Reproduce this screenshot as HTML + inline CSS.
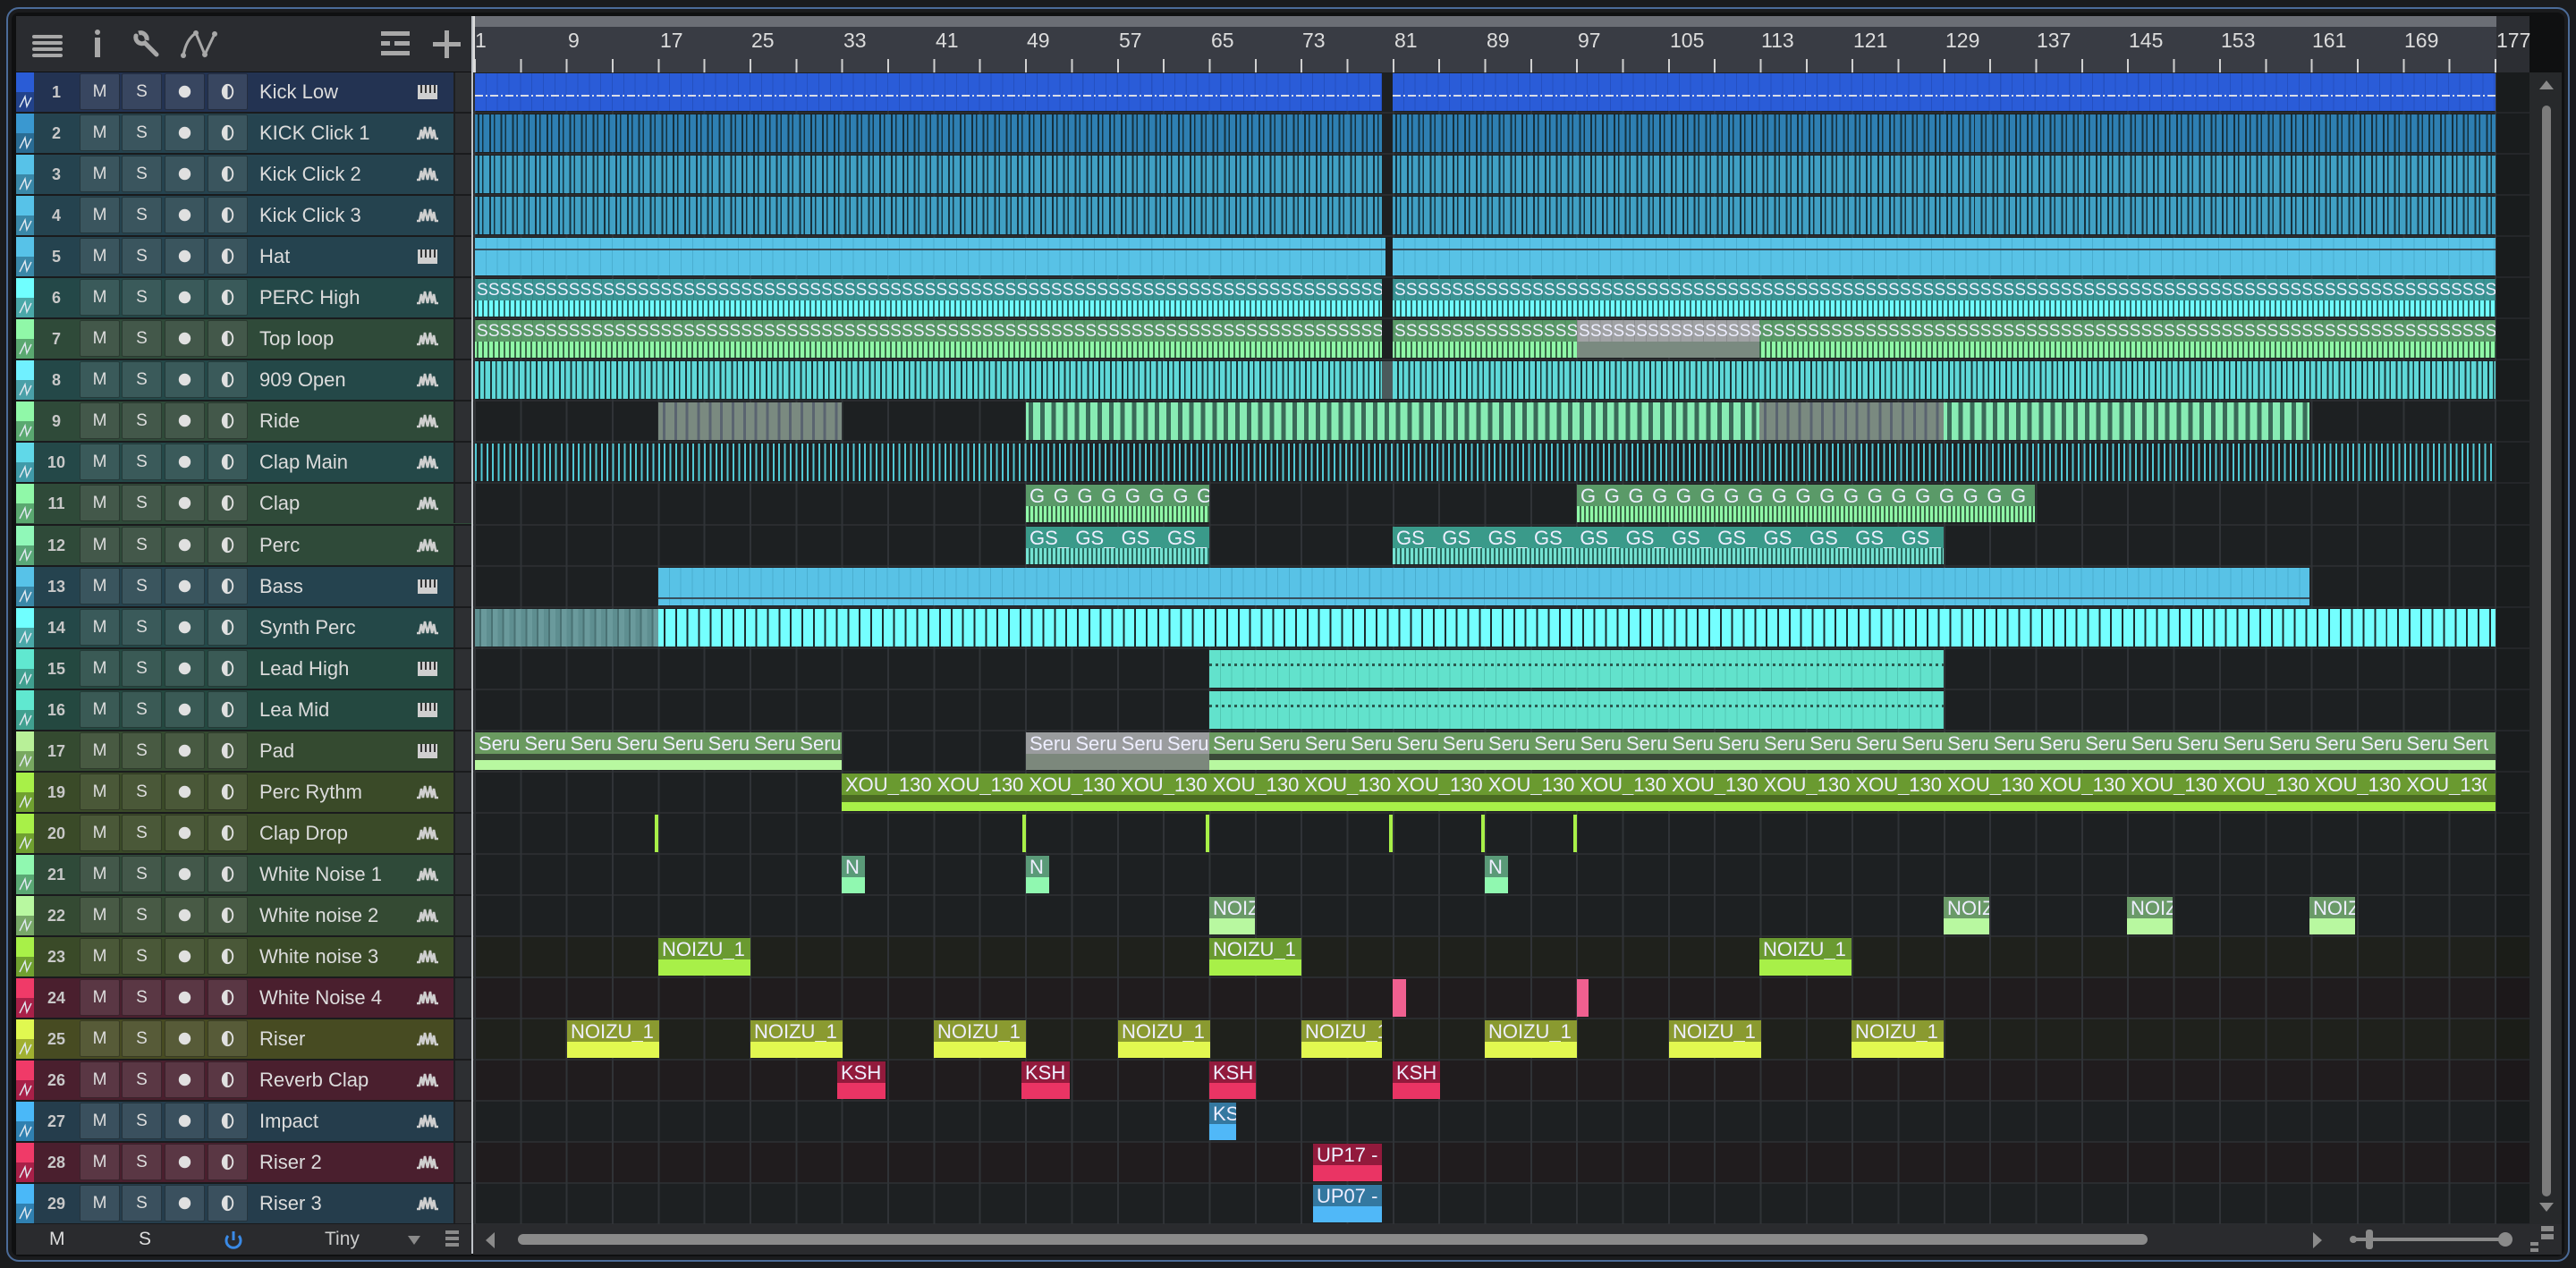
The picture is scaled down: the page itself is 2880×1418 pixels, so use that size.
<!DOCTYPE html>
<html><head><meta charset="utf-8">
<style>
*{box-sizing:border-box;margin:0;padding:0}
body{width:2880px;height:1418px;background:#1a1b1d;position:relative;overflow:hidden;font-family:"Liberation Sans",sans-serif}
.frame{position:absolute;left:7px;top:8px;width:2866px;height:1403px;border:2px solid #4b6b98;border-radius:14px}
.panel{position:absolute;left:13px;top:14px;width:2854px;height:1391px;background:#0f1011;border-radius:8px}
.hdr{position:absolute;left:18px;top:18px;width:509px;height:62px;background:#2a2c30}
.ruler{position:absolute;left:529px;top:18px;width:2299px;height:63px;background:#393c44}
.loop{position:absolute;left:0;top:0;width:2262px;height:12px;background:#6b6e75}
.rl{position:absolute;top:14px;font-size:23px;color:#dcdcdc}
.tl{position:absolute;left:529px;top:81px;width:2299px;height:1288px;background:#1d2022;overflow:hidden}
.grid{position:absolute;inset:0;background:repeating-linear-gradient(90deg,transparent 0 1px,#303337 1px 3px,transparent 3px 51.34px);z-index:2;pointer-events:none}
.row{position:relative;height:46.05px;border-bottom:2px solid #2a2c2f}
.row.p{background:#201c1e}.row.y{background:#1f211c}
.c{position:absolute;top:1px;height:42px;overflow:hidden;z-index:3}
.h{height:24px;font-size:22px;color:#eef;line-height:26px;white-space:nowrap;padding-left:4px;overflow:hidden}
.h span{display:inline-block;overflow:hidden;vertical-align:top}
.h.s{font-size:19px;letter-spacing:0.165px;padding-left:2px;background-image:repeating-linear-gradient(90deg,rgba(0,0,0,.12) 0 1px,transparent 1px 12.835px)}
.bd{height:18px}
.list{position:absolute;left:18px;top:81px;width:509px}
.t{position:relative;height:46.05px;border-bottom:2px solid #1a1b1d}
.cs{position:absolute;left:0;top:0;width:20px;height:44px}
.cs b{display:block;height:22px}
.cs i{display:block;height:22px}
.n{position:absolute;left:20px;top:0;width:50px;height:44px;text-align:center;font-weight:bold;font-size:18px;line-height:44px;color:#c8c8c8}
.b{position:absolute;top:1px;width:45px;height:41px;border:1px solid rgba(0,0,0,.35);border-radius:2px;text-align:center;line-height:40px;font-size:19px;color:#ddd}
.nm{position:absolute;left:272px;top:0;line-height:44px;font-size:22px;color:#dcdcdc;white-space:nowrap}
.ic{position:absolute;left:447px;top:12px}
.sb{position:absolute;left:489px;top:0;width:20px;height:44px;background:#2d2f32;border-left:2px solid #1e1f21}
.bot{position:absolute;top:1369px;height:34px;background:#2a2b2e}
</style></head><body>
<svg width="0" height="0" style="position:absolute">
<symbol id="wv" viewBox="0 0 26 20"><path d="M1 16 L4 16 L6 6 L8 16 L10 3 L13 16 L16 3 L18 16 L20 6 L22 16 L25 16" fill="none" stroke="#cfcfcf" stroke-width="2.6"/></symbol>
<symbol id="pn" viewBox="0 0 26 20"><rect x="2" y="2" width="22" height="16" fill="#cfcfcf"/><rect x="5" y="2" width="2" height="9" fill="#333"/><rect x="10" y="2" width="2" height="9" fill="#333"/><rect x="15" y="2" width="2" height="9" fill="#333"/><rect x="20" y="2" width="2" height="9" fill="#333"/></symbol>
<symbol id="au" viewBox="0 0 20 22"><path d="M4 17 L10 5 L12 16 L17 6" fill="none" stroke="#e0e8f0" stroke-width="1.4"/></symbol>
<symbol id="rc" viewBox="0 0 45 40"><circle cx="22.5" cy="20" r="7" fill="#e0e0e0"/></symbol>
<symbol id="mn" viewBox="0 0 45 40"><ellipse cx="22.5" cy="20" rx="6" ry="8" fill="none" stroke="#e0e0e0" stroke-width="2"/><path d="M22.5 12 A6 8 0 0 0 22.5 28 Z" fill="#e0e0e0"/></symbol>
</svg>
<div class="frame"></div>
<div class="panel"></div>
<div class="hdr">
<svg style="position:absolute;left:18px;top:20px" width="36" height="26"><rect x="0" y="1" width="34" height="4" rx="2" fill="#a8a8a8"/><rect x="0" y="8" width="34" height="4" rx="2" fill="#a8a8a8"/><rect x="0" y="15" width="34" height="4" rx="2" fill="#a8a8a8"/><rect x="0" y="22" width="34" height="4" rx="2" fill="#a8a8a8"/></svg>
<svg style="position:absolute;left:86px;top:15px" width="12" height="32"><circle cx="5" cy="3" r="3" fill="#a8a8a8"/><rect x="2" y="9" width="6" height="22" fill="#a8a8a8"/></svg>
<svg style="position:absolute;left:130px;top:16px" width="34" height="32"><path d="M4 6 A7 7 0 0 0 14 14 L27 27" fill="none" stroke="#a8a8a8" stroke-width="5" stroke-linecap="round"/><path d="M7 3 A7 7 0 0 1 16 11" fill="none" stroke="#a8a8a8" stroke-width="5"/></svg>
<svg style="position:absolute;left:182px;top:14px" width="50" height="34"><path d="M5 30 Q8 12 19 5 M19 5 L29 29 L40 6" fill="none" stroke="#a8a8a8" stroke-width="3"/><circle cx="5" cy="30" r="3" fill="#a8a8a8"/><circle cx="19" cy="5" r="3" fill="#a8a8a8"/><circle cx="29" cy="29" r="3" fill="#a8a8a8"/><circle cx="40" cy="6" r="3" fill="#a8a8a8"/></svg>
<svg style="position:absolute;left:408px;top:17px" width="34" height="28"><rect x="0" y="0" width="32" height="5" fill="#a8a8a8"/><rect x="0" y="11" width="10" height="5" fill="#a8a8a8"/><rect x="15" y="11" width="17" height="5" fill="#a8a8a8"/><rect x="0" y="22" width="32" height="5" fill="#a8a8a8"/></svg>
<svg style="position:absolute;left:466px;top:16px" width="32" height="32"><rect x="13" y="0" width="5" height="31" fill="#a8a8a8"/><rect x="0" y="13" width="31" height="5" fill="#a8a8a8"/></svg>
</div>
<div class="ruler"><div class="loop"></div>
<div style="position:absolute;left:2262px;top:0;width:37px;height:63px;background:#2c2e33"></div>
<span class="rl" style="left:2px">1</span><span class="rl" style="left:106px">9</span><span class="rl" style="left:209px">17</span><span class="rl" style="left:311px">25</span><span class="rl" style="left:414px">33</span><span class="rl" style="left:517px">41</span><span class="rl" style="left:619px">49</span><span class="rl" style="left:722px">57</span><span class="rl" style="left:825px">65</span><span class="rl" style="left:927px">73</span><span class="rl" style="left:1030px">81</span><span class="rl" style="left:1133px">89</span><span class="rl" style="left:1235px">97</span><span class="rl" style="left:1338px">105</span><span class="rl" style="left:1440px">113</span><span class="rl" style="left:1543px">121</span><span class="rl" style="left:1646px">129</span><span class="rl" style="left:1748px">137</span><span class="rl" style="left:1851px">145</span><span class="rl" style="left:1954px">153</span><span class="rl" style="left:2056px">161</span><span class="rl" style="left:2159px">169</span><span class="rl" style="left:2262px">177</span>
<div style="position:absolute;left:0;top:48px;width:2300px;height:15px;background:repeating-linear-gradient(90deg,transparent 0 1px,#d0d0d0 1px 3px,transparent 3px 51.34px)"></div>
<div style="position:absolute;left:0;top:0;width:2px;height:63px;background:#ddd"></div>
</div>

<div class="list">
<div class="t" style="background:#233352"><div class="cs"><b style="background:#2a5cd6"></b><i style="background:#22428a"><svg width="20" height="22"><use href="#au"/></svg></i></div><span class="n">1</span><span class="b" style="left:71px;background:#384660">M</span><span class="b" style="left:118px;background:#384660">S</span><span class="b" style="left:166px;background:#384660"><svg width="43" height="39"><use href="#rc"/></svg></span><span class="b" style="left:214px;background:#384660"><svg width="43" height="39"><use href="#mn"/></svg></span><span class="nm">Kick Low</span><svg class="ic" width="26" height="20"><use href="#pn"/></svg><div class="sb"></div></div>
<div class="t" style="background:#25434f"><div class="cs"><b style="background:#3a98d0"></b><i style="background:#2a6c94"><svg width="20" height="22"><use href="#au"/></svg></i></div><span class="n">2</span><span class="b" style="left:71px;background:#3a555e">M</span><span class="b" style="left:118px;background:#3a555e">S</span><span class="b" style="left:166px;background:#3a555e"><svg width="43" height="39"><use href="#rc"/></svg></span><span class="b" style="left:214px;background:#3a555e"><svg width="43" height="39"><use href="#mn"/></svg></span><span class="nm">KICK Click 1</span><svg class="ic" width="26" height="20"><use href="#wv"/></svg><div class="sb"></div></div>
<div class="t" style="background:#25434f"><div class="cs"><b style="background:#57c2e8"></b><i style="background:#3a88a8"><svg width="20" height="22"><use href="#au"/></svg></i></div><span class="n">3</span><span class="b" style="left:71px;background:#3a555e">M</span><span class="b" style="left:118px;background:#3a555e">S</span><span class="b" style="left:166px;background:#3a555e"><svg width="43" height="39"><use href="#rc"/></svg></span><span class="b" style="left:214px;background:#3a555e"><svg width="43" height="39"><use href="#mn"/></svg></span><span class="nm">Kick Click 2</span><svg class="ic" width="26" height="20"><use href="#wv"/></svg><div class="sb"></div></div>
<div class="t" style="background:#25434f"><div class="cs"><b style="background:#57c2e8"></b><i style="background:#3a88a8"><svg width="20" height="22"><use href="#au"/></svg></i></div><span class="n">4</span><span class="b" style="left:71px;background:#3a555e">M</span><span class="b" style="left:118px;background:#3a555e">S</span><span class="b" style="left:166px;background:#3a555e"><svg width="43" height="39"><use href="#rc"/></svg></span><span class="b" style="left:214px;background:#3a555e"><svg width="43" height="39"><use href="#mn"/></svg></span><span class="nm">Kick Click 3</span><svg class="ic" width="26" height="20"><use href="#wv"/></svg><div class="sb"></div></div>
<div class="t" style="background:#25434f"><div class="cs"><b style="background:#57c2e8"></b><i style="background:#3a88a8"><svg width="20" height="22"><use href="#au"/></svg></i></div><span class="n">5</span><span class="b" style="left:71px;background:#3a555e">M</span><span class="b" style="left:118px;background:#3a555e">S</span><span class="b" style="left:166px;background:#3a555e"><svg width="43" height="39"><use href="#rc"/></svg></span><span class="b" style="left:214px;background:#3a555e"><svg width="43" height="39"><use href="#mn"/></svg></span><span class="nm">Hat</span><svg class="ic" width="26" height="20"><use href="#pn"/></svg><div class="sb"></div></div>
<div class="t" style="background:#244848"><div class="cs"><b style="background:#70ffff"></b><i style="background:#4aa8a8"><svg width="20" height="22"><use href="#au"/></svg></i></div><span class="n">6</span><span class="b" style="left:71px;background:#3a5a5a">M</span><span class="b" style="left:118px;background:#3a5a5a">S</span><span class="b" style="left:166px;background:#3a5a5a"><svg width="43" height="39"><use href="#rc"/></svg></span><span class="b" style="left:214px;background:#3a5a5a"><svg width="43" height="39"><use href="#mn"/></svg></span><span class="nm">PERC High</span><svg class="ic" width="26" height="20"><use href="#wv"/></svg><div class="sb"></div></div>
<div class="t" style="background:#2f4a39"><div class="cs"><b style="background:#90f8a8"></b><i style="background:#5aa870"><svg width="20" height="22"><use href="#au"/></svg></i></div><span class="n">7</span><span class="b" style="left:71px;background:#43584a">M</span><span class="b" style="left:118px;background:#43584a">S</span><span class="b" style="left:166px;background:#43584a"><svg width="43" height="39"><use href="#rc"/></svg></span><span class="b" style="left:214px;background:#43584a"><svg width="43" height="39"><use href="#mn"/></svg></span><span class="nm">Top loop</span><svg class="ic" width="26" height="20"><use href="#wv"/></svg><div class="sb"></div></div>
<div class="t" style="background:#244848"><div class="cs"><b style="background:#70f0ff"></b><i style="background:#4aa0a8"><svg width="20" height="22"><use href="#au"/></svg></i></div><span class="n">8</span><span class="b" style="left:71px;background:#3a5a5a">M</span><span class="b" style="left:118px;background:#3a5a5a">S</span><span class="b" style="left:166px;background:#3a5a5a"><svg width="43" height="39"><use href="#rc"/></svg></span><span class="b" style="left:214px;background:#3a5a5a"><svg width="43" height="39"><use href="#mn"/></svg></span><span class="nm">909 Open</span><svg class="ic" width="26" height="20"><use href="#wv"/></svg><div class="sb"></div></div>
<div class="t" style="background:#2f4a39"><div class="cs"><b style="background:#90f8a8"></b><i style="background:#5aa870"><svg width="20" height="22"><use href="#au"/></svg></i></div><span class="n">9</span><span class="b" style="left:71px;background:#43584a">M</span><span class="b" style="left:118px;background:#43584a">S</span><span class="b" style="left:166px;background:#43584a"><svg width="43" height="39"><use href="#rc"/></svg></span><span class="b" style="left:214px;background:#43584a"><svg width="43" height="39"><use href="#mn"/></svg></span><span class="nm">Ride</span><svg class="ic" width="26" height="20"><use href="#wv"/></svg><div class="sb"></div></div>
<div class="t" style="background:#244848"><div class="cs"><b style="background:#60d8e8"></b><i style="background:#409aa8"><svg width="20" height="22"><use href="#au"/></svg></i></div><span class="n">10</span><span class="b" style="left:71px;background:#3a5a5a">M</span><span class="b" style="left:118px;background:#3a5a5a">S</span><span class="b" style="left:166px;background:#3a5a5a"><svg width="43" height="39"><use href="#rc"/></svg></span><span class="b" style="left:214px;background:#3a5a5a"><svg width="43" height="39"><use href="#mn"/></svg></span><span class="nm">Clap Main</span><svg class="ic" width="26" height="20"><use href="#wv"/></svg><div class="sb"></div></div>
<div class="t" style="background:#2f4a39"><div class="cs"><b style="background:#90f8a8"></b><i style="background:#5aa870"><svg width="20" height="22"><use href="#au"/></svg></i></div><span class="n">11</span><span class="b" style="left:71px;background:#43584a">M</span><span class="b" style="left:118px;background:#43584a">S</span><span class="b" style="left:166px;background:#43584a"><svg width="43" height="39"><use href="#rc"/></svg></span><span class="b" style="left:214px;background:#43584a"><svg width="43" height="39"><use href="#mn"/></svg></span><span class="nm">Clap</span><svg class="ic" width="26" height="20"><use href="#wv"/></svg><div class="sb"></div></div>
<div class="t" style="background:#2f4a39"><div class="cs"><b style="background:#90f8b8"></b><i style="background:#5aa878"><svg width="20" height="22"><use href="#au"/></svg></i></div><span class="n">12</span><span class="b" style="left:71px;background:#43584a">M</span><span class="b" style="left:118px;background:#43584a">S</span><span class="b" style="left:166px;background:#43584a"><svg width="43" height="39"><use href="#rc"/></svg></span><span class="b" style="left:214px;background:#43584a"><svg width="43" height="39"><use href="#mn"/></svg></span><span class="nm">Perc</span><svg class="ic" width="26" height="20"><use href="#wv"/></svg><div class="sb"></div></div>
<div class="t" style="background:#25434f"><div class="cs"><b style="background:#57c2e8"></b><i style="background:#3a88a8"><svg width="20" height="22"><use href="#au"/></svg></i></div><span class="n">13</span><span class="b" style="left:71px;background:#3a555e">M</span><span class="b" style="left:118px;background:#3a555e">S</span><span class="b" style="left:166px;background:#3a555e"><svg width="43" height="39"><use href="#rc"/></svg></span><span class="b" style="left:214px;background:#3a555e"><svg width="43" height="39"><use href="#mn"/></svg></span><span class="nm">Bass</span><svg class="ic" width="26" height="20"><use href="#pn"/></svg><div class="sb"></div></div>
<div class="t" style="background:#244848"><div class="cs"><b style="background:#70ffff"></b><i style="background:#4aa8a8"><svg width="20" height="22"><use href="#au"/></svg></i></div><span class="n">14</span><span class="b" style="left:71px;background:#3a5a5a">M</span><span class="b" style="left:118px;background:#3a5a5a">S</span><span class="b" style="left:166px;background:#3a5a5a"><svg width="43" height="39"><use href="#rc"/></svg></span><span class="b" style="left:214px;background:#3a5a5a"><svg width="43" height="39"><use href="#mn"/></svg></span><span class="nm">Synth Perc</span><svg class="ic" width="26" height="20"><use href="#wv"/></svg><div class="sb"></div></div>
<div class="t" style="background:#244840"><div class="cs"><b style="background:#60e8d0"></b><i style="background:#40a090"><svg width="20" height="22"><use href="#au"/></svg></i></div><span class="n">15</span><span class="b" style="left:71px;background:#3a5a55">M</span><span class="b" style="left:118px;background:#3a5a55">S</span><span class="b" style="left:166px;background:#3a5a55"><svg width="43" height="39"><use href="#rc"/></svg></span><span class="b" style="left:214px;background:#3a5a55"><svg width="43" height="39"><use href="#mn"/></svg></span><span class="nm">Lead High</span><svg class="ic" width="26" height="20"><use href="#pn"/></svg><div class="sb"></div></div>
<div class="t" style="background:#244840"><div class="cs"><b style="background:#60e8d0"></b><i style="background:#40a090"><svg width="20" height="22"><use href="#au"/></svg></i></div><span class="n">16</span><span class="b" style="left:71px;background:#3a5a55">M</span><span class="b" style="left:118px;background:#3a5a55">S</span><span class="b" style="left:166px;background:#3a5a55"><svg width="43" height="39"><use href="#rc"/></svg></span><span class="b" style="left:214px;background:#3a5a55"><svg width="43" height="39"><use href="#mn"/></svg></span><span class="nm">Lea Mid</span><svg class="ic" width="26" height="20"><use href="#pn"/></svg><div class="sb"></div></div>
<div class="t" style="background:#344a30"><div class="cs"><b style="background:#b8f098"></b><i style="background:#78a860"><svg width="20" height="22"><use href="#au"/></svg></i></div><span class="n">17</span><span class="b" style="left:71px;background:#485a42">M</span><span class="b" style="left:118px;background:#485a42">S</span><span class="b" style="left:166px;background:#485a42"><svg width="43" height="39"><use href="#rc"/></svg></span><span class="b" style="left:214px;background:#485a42"><svg width="43" height="39"><use href="#mn"/></svg></span><span class="nm">Pad</span><svg class="ic" width="26" height="20"><use href="#pn"/></svg><div class="sb"></div></div>
<div class="t" style="background:#3a4a28"><div class="cs"><b style="background:#a8f048"></b><i style="background:#70a030"><svg width="20" height="22"><use href="#au"/></svg></i></div><span class="n">19</span><span class="b" style="left:71px;background:#4a5838">M</span><span class="b" style="left:118px;background:#4a5838">S</span><span class="b" style="left:166px;background:#4a5838"><svg width="43" height="39"><use href="#rc"/></svg></span><span class="b" style="left:214px;background:#4a5838"><svg width="43" height="39"><use href="#mn"/></svg></span><span class="nm">Perc Rythm</span><svg class="ic" width="26" height="20"><use href="#wv"/></svg><div class="sb"></div></div>
<div class="t" style="background:#3a4a28"><div class="cs"><b style="background:#a8f048"></b><i style="background:#70a030"><svg width="20" height="22"><use href="#au"/></svg></i></div><span class="n">20</span><span class="b" style="left:71px;background:#4a5838">M</span><span class="b" style="left:118px;background:#4a5838">S</span><span class="b" style="left:166px;background:#4a5838"><svg width="43" height="39"><use href="#rc"/></svg></span><span class="b" style="left:214px;background:#4a5838"><svg width="43" height="39"><use href="#mn"/></svg></span><span class="nm">Clap Drop</span><svg class="ic" width="26" height="20"><use href="#wv"/></svg><div class="sb"></div></div>
<div class="t" style="background:#2f4a39"><div class="cs"><b style="background:#90f8b0"></b><i style="background:#5aa874"><svg width="20" height="22"><use href="#au"/></svg></i></div><span class="n">21</span><span class="b" style="left:71px;background:#43584a">M</span><span class="b" style="left:118px;background:#43584a">S</span><span class="b" style="left:166px;background:#43584a"><svg width="43" height="39"><use href="#rc"/></svg></span><span class="b" style="left:214px;background:#43584a"><svg width="43" height="39"><use href="#mn"/></svg></span><span class="nm">White Noise 1</span><svg class="ic" width="26" height="20"><use href="#wv"/></svg><div class="sb"></div></div>
<div class="t" style="background:#344a33"><div class="cs"><b style="background:#b8f8a0"></b><i style="background:#78a868"><svg width="20" height="22"><use href="#au"/></svg></i></div><span class="n">22</span><span class="b" style="left:71px;background:#485a45">M</span><span class="b" style="left:118px;background:#485a45">S</span><span class="b" style="left:166px;background:#485a45"><svg width="43" height="39"><use href="#rc"/></svg></span><span class="b" style="left:214px;background:#485a45"><svg width="43" height="39"><use href="#mn"/></svg></span><span class="nm">White noise 2</span><svg class="ic" width="26" height="20"><use href="#wv"/></svg><div class="sb"></div></div>
<div class="t" style="background:#3a4a28"><div class="cs"><b style="background:#a8f048"></b><i style="background:#70a030"><svg width="20" height="22"><use href="#au"/></svg></i></div><span class="n">23</span><span class="b" style="left:71px;background:#4a5838">M</span><span class="b" style="left:118px;background:#4a5838">S</span><span class="b" style="left:166px;background:#4a5838"><svg width="43" height="39"><use href="#rc"/></svg></span><span class="b" style="left:214px;background:#4a5838"><svg width="43" height="39"><use href="#mn"/></svg></span><span class="nm">White noise 3</span><svg class="ic" width="26" height="20"><use href="#wv"/></svg><div class="sb"></div></div>
<div class="t" style="background:#4a1f2e"><div class="cs"><b style="background:#f03a68"></b><i style="background:#a82048"><svg width="20" height="22"><use href="#au"/></svg></i></div><span class="n">24</span><span class="b" style="left:71px;background:#5a3744">M</span><span class="b" style="left:118px;background:#5a3744">S</span><span class="b" style="left:166px;background:#5a3744"><svg width="43" height="39"><use href="#rc"/></svg></span><span class="b" style="left:214px;background:#5a3744"><svg width="43" height="39"><use href="#mn"/></svg></span><span class="nm">White Noise 4</span><svg class="ic" width="26" height="20"><use href="#wv"/></svg><div class="sb"></div></div>
<div class="t" style="background:#474b22"><div class="cs"><b style="background:#e0f850"></b><i style="background:#a0b030"><svg width="20" height="22"><use href="#au"/></svg></i></div><span class="n">25</span><span class="b" style="left:71px;background:#575b38">M</span><span class="b" style="left:118px;background:#575b38">S</span><span class="b" style="left:166px;background:#575b38"><svg width="43" height="39"><use href="#rc"/></svg></span><span class="b" style="left:214px;background:#575b38"><svg width="43" height="39"><use href="#mn"/></svg></span><span class="nm">Riser</span><svg class="ic" width="26" height="20"><use href="#wv"/></svg><div class="sb"></div></div>
<div class="t" style="background:#4a1f2e"><div class="cs"><b style="background:#f03a68"></b><i style="background:#a82048"><svg width="20" height="22"><use href="#au"/></svg></i></div><span class="n">26</span><span class="b" style="left:71px;background:#5a3744">M</span><span class="b" style="left:118px;background:#5a3744">S</span><span class="b" style="left:166px;background:#5a3744"><svg width="43" height="39"><use href="#rc"/></svg></span><span class="b" style="left:214px;background:#5a3744"><svg width="43" height="39"><use href="#mn"/></svg></span><span class="nm">Reverb Clap</span><svg class="ic" width="26" height="20"><use href="#wv"/></svg><div class="sb"></div></div>
<div class="t" style="background:#253d4c"><div class="cs"><b style="background:#4ab8f8"></b><i style="background:#3080b0"><svg width="20" height="22"><use href="#au"/></svg></i></div><span class="n">27</span><span class="b" style="left:71px;background:#3a505e">M</span><span class="b" style="left:118px;background:#3a505e">S</span><span class="b" style="left:166px;background:#3a505e"><svg width="43" height="39"><use href="#rc"/></svg></span><span class="b" style="left:214px;background:#3a505e"><svg width="43" height="39"><use href="#mn"/></svg></span><span class="nm">Impact</span><svg class="ic" width="26" height="20"><use href="#wv"/></svg><div class="sb"></div></div>
<div class="t" style="background:#4a1f2e"><div class="cs"><b style="background:#f03a68"></b><i style="background:#a82048"><svg width="20" height="22"><use href="#au"/></svg></i></div><span class="n">28</span><span class="b" style="left:71px;background:#5a3744">M</span><span class="b" style="left:118px;background:#5a3744">S</span><span class="b" style="left:166px;background:#5a3744"><svg width="43" height="39"><use href="#rc"/></svg></span><span class="b" style="left:214px;background:#5a3744"><svg width="43" height="39"><use href="#mn"/></svg></span><span class="nm">Riser 2</span><svg class="ic" width="26" height="20"><use href="#wv"/></svg><div class="sb"></div></div>
<div class="t" style="background:#253d4c"><div class="cs"><b style="background:#4ab8f8"></b><i style="background:#3080b0"><svg width="20" height="22"><use href="#au"/></svg></i></div><span class="n">29</span><span class="b" style="left:71px;background:#3a505e">M</span><span class="b" style="left:118px;background:#3a505e">S</span><span class="b" style="left:166px;background:#3a505e"><svg width="43" height="39"><use href="#rc"/></svg></span><span class="b" style="left:214px;background:#3a505e"><svg width="43" height="39"><use href="#mn"/></svg></span><span class="nm">Riser 3</span><svg class="ic" width="26" height="20"><use href="#wv"/></svg><div class="sb"></div></div>
</div>
<div style="position:absolute;left:527px;top:18px;width:2px;height:1384px;background:#bfc3c8"></div>

<div class="tl"><div class="grid"></div>
<!-- 1 -->
<div class="row"><div class="c" style="left:2px;width:1014px;background:repeating-linear-gradient(90deg,#2a5cd8 0 11.8px,#2450c0 11.8px 12.835px)"><div style="margin-top:24px;height:2px;background:repeating-linear-gradient(90deg,#d8dce8 0 9px,transparent 9px 12px,#d8dce8 12px 14px,transparent 14px 17px)"></div></div><div class="c" style="left:1028px;width:1233px;background:repeating-linear-gradient(90deg,#2a5cd8 0 11.8px,#2450c0 11.8px 12.835px)"><div style="margin-top:24px;height:2px;background:repeating-linear-gradient(90deg,#d8dce8 0 9px,transparent 9px 12px,#d8dce8 12px 14px,transparent 14px 17px)"></div></div></div>
<!-- 2 -->
<div class="row"><div class="c" style="left:2px;width:1014px;background:repeating-linear-gradient(90deg,#2e7fb2 0 3px,#14303e 3px 5px,#2e7fb2 5px 8px,#14303e 8px 9.5px,#2e7fb2 9.5px 12.835px)"></div><div class="c" style="left:1028px;width:1233px;background:repeating-linear-gradient(90deg,#2e7fb2 0 3px,#14303e 3px 5px,#2e7fb2 5px 8px,#14303e 8px 9.5px,#2e7fb2 9.5px 12.835px)"></div></div>
<!-- 3 -->
<div class="row"><div class="c" style="left:2px;width:1014px;background:repeating-linear-gradient(90deg,#40a0c4 0 3px,#16323e 3px 5px,#40a0c4 5px 8px,#16323e 8px 9.5px,#40a0c4 9.5px 12.835px)"></div><div class="c" style="left:1028px;width:1233px;background:repeating-linear-gradient(90deg,#40a0c4 0 3px,#16323e 3px 5px,#40a0c4 5px 8px,#16323e 8px 9.5px,#40a0c4 9.5px 12.835px)"></div></div>
<!-- 4 -->
<div class="row"><div class="c" style="left:2px;width:1014px;background:repeating-linear-gradient(90deg,#40a0c4 0 3px,#16323e 3px 5px,#40a0c4 5px 8px,#16323e 8px 9.5px,#40a0c4 9.5px 12.835px)"></div><div class="c" style="left:1028px;width:1233px;background:repeating-linear-gradient(90deg,#40a0c4 0 3px,#16323e 3px 5px,#40a0c4 5px 8px,#16323e 8px 9.5px,#40a0c4 9.5px 12.835px)"></div></div>
<!-- 5 -->
<div class="row"><div class="c" style="left:2px;width:1018px;background:repeating-linear-gradient(90deg,#58c2e6 0 11.8px,#4aaed0 11.8px 12.835px)"><div style="margin-top:12px;height:2px;background:#36505e"></div></div><div class="c" style="left:1028px;width:1233px;background:repeating-linear-gradient(90deg,#58c2e6 0 11.8px,#4aaed0 11.8px 12.835px)"><div style="margin-top:12px;height:2px;background:#36505e"></div></div></div>
<!-- 6 -->
<div class="row"><div class="c" style="left:2px;width:1014px;background:#70fcff"><div class="h s" style="background-color:#3a9494">SSSSSSSSSSSSSSSSSSSSSSSSSSSSSSSSSSSSSSSSSSSSSSSSSSSSSSSSSSSSSSSSSSSSSSSSSSSSSSS</div><div class="bd" style="background:repeating-linear-gradient(90deg,transparent 0 2px,#2a6a6a 2px 4px,transparent 4px 6px)"></div></div><div class="c" style="left:1028px;width:1233px;background:#70fcff"><div class="h s" style="background-color:#3a9494">SSSSSSSSSSSSSSSSSSSSSSSSSSSSSSSSSSSSSSSSSSSSSSSSSSSSSSSSSSSSSSSSSSSSSSSSSSSSSSSSSSSSSSSSSSSSSSSS</div><div class="bd" style="background:repeating-linear-gradient(90deg,transparent 0 2px,#2a6a6a 2px 4px,transparent 4px 6px)"></div></div></div>
<!-- 7 -->
<div class="row"><div class="c" style="left:2px;width:1014px;background:#90f8a8"><div class="h s" style="background-color:#5a9a68">SSSSSSSSSSSSSSSSSSSSSSSSSSSSSSSSSSSSSSSSSSSSSSSSSSSSSSSSSSSSSSSSSSSSSSSSSSSSSSS</div><div class="bd" style="background:repeating-linear-gradient(90deg,transparent 0 2px,#3a6a48 2px 4px,transparent 4px 6px)"></div></div><div class="c" style="left:1028px;width:1233px;background:#90f8a8"><div class="h s" style="background-color:#5a9a68">SSSSSSSSSSSSSSSSSSSSSSSSSSSSSSSSSSSSSSSSSSSSSSSSSSSSSSSSSSSSSSSSSSSSSSSSSSSSSSSSSSSSSSSSSSSSSSSS</div><div class="bd" style="background:repeating-linear-gradient(90deg,transparent 0 2px,#3a6a48 2px 4px,transparent 4px 6px)"></div></div><div class="c" style="left:1234px;width:204px;background:#7a8a80"><div class="h s" style="background-color:#a0a2a4">SSSSSSSSSSSSSSSS</div></div></div>
<!-- 8 -->
<div class="row"><div class="c" style="left:2px;width:2259px;background:repeating-linear-gradient(90deg,#5fd8d8 0 4px,#183436 4px 6px,#5fd8d8 6px 10px,#183436 10px 11.5px,#5fd8d8 11.5px 12.835px)"></div><div class="c" style="left:1016px;width:12px;background:#4a5a5c"></div></div>
<!-- 9 -->
<div class="row"><div class="c" style="left:207px;width:205px;background:repeating-linear-gradient(90deg,#7a8a80 0 5px,#5a6470 5px 8px,#7a8a80 8px 12.835px)"></div><div class="c" style="left:618px;width:1435px;background:repeating-linear-gradient(90deg,#88ecb4 0 3px,#3a6a58 3px 8px,#88ecb4 8px 12.835px)"></div><div class="c" style="left:1438px;width:206px;background:repeating-linear-gradient(90deg,#7a8a80 0 5px,#5a6470 5px 8px,#7a8a80 8px 12.835px)"></div></div>
<!-- 10 -->
<div class="row"><div class="c" style="left:2px;width:2259px;background:repeating-linear-gradient(90deg,#52c8d4 0 2px,transparent 2px 6.4px)"></div></div>
<!-- 11 -->
<div class="row"><div class="c" style="left:618px;width:205px;background:#90f8a8"><div class="h" style="background:#5a9a68;word-spacing:3.5px">G G G G G G G G</div><div class="bd" style="background:repeating-linear-gradient(90deg,transparent 0 3px,#3a6a48 3px 5px)"></div></div><div class="c" style="left:1234px;width:512px;background:#90f8a8"><div class="h" style="background:#5a9a68;word-spacing:3.5px">G G G G G G G G G G G G G G G G G G G G</div><div class="bd" style="background:repeating-linear-gradient(90deg,transparent 0 3px,#3a6a48 3px 5px)"></div></div></div>
<!-- 12 -->
<div class="row"><div class="c" style="left:618px;width:205px;background:#74e2d2"><div class="h" style="background:#3a9a8a"><span style="width:51.34px">GS_</span><span style="width:51.34px">GS_</span><span style="width:51.34px">GS_</span><span style="width:48px">GS_</span></div><div class="bd" style="background:repeating-linear-gradient(90deg,transparent 0 3px,#2a6a60 3px 5px)"></div></div><div class="c" style="left:1028px;width:616px;background:#74e2d2"><div class="h" style="background:#3a9a8a"><span style="width:51.34px">GS_</span><span style="width:51.34px">GS_</span><span style="width:51.34px">GS_</span><span style="width:51.34px">GS_</span><span style="width:51.34px">GS_</span><span style="width:51.34px">GS_</span><span style="width:51.34px">GS_</span><span style="width:51.34px">GS_</span><span style="width:51.34px">GS_</span><span style="width:51.34px">GS_</span><span style="width:51.34px">GS_</span><span style="width:45px">GS_</span></div><div class="bd" style="background:repeating-linear-gradient(90deg,transparent 0 3px,#2a6a60 3px 5px)"></div></div></div>
<!-- 13 -->
<div class="row"><div class="c" style="left:207px;width:1846px;background:repeating-linear-gradient(90deg,#58c2e6 0 11.8px,#4aaed0 11.8px 12.835px)"><div style="margin-top:33px;height:2px;background:#36505e"></div></div></div>
<!-- 14 -->
<div class="row"><div class="c" style="left:2px;width:205px;background:repeating-linear-gradient(90deg,#5e8e90 0 5px,#4a7274 5px 7px,#6a9a9c 7px 12.835px)"></div><div class="c" style="left:207px;width:2054px;background:repeating-linear-gradient(90deg,#74ffff 0 6px,#1a2c2e 6px 8px,#74ffff 8px 12.835px)"></div></div>
<!-- 15 -->
<div class="row"><div class="c" style="left:823px;width:821px;background:repeating-linear-gradient(90deg,#62e2cc 0 11.8px,#52c8b4 11.8px 12.835px)"><div style="margin-top:15px;height:3px;background:repeating-linear-gradient(90deg,#2a5a50 0 3px,transparent 3px 7px)"></div></div></div>
<!-- 16 -->
<div class="row"><div class="c" style="left:823px;width:821px;background:repeating-linear-gradient(90deg,#62e2cc 0 11.8px,#52c8b4 11.8px 12.835px)"><div style="margin-top:15px;height:3px;background:repeating-linear-gradient(90deg,#2a5a50 0 3px,transparent 3px 7px)"></div></div></div>
<!-- 17 -->
<div class="row"><div class="c" style="left:2px;width:410px;background:#222"><div class="h" style="background:#6a9a60"><span style="width:51.34px">Seru</span><span style="width:51.34px">Seru</span><span style="width:51.34px">Seru</span><span style="width:51.34px">Seru</span><span style="width:51.34px">Seru</span><span style="width:51.34px">Seru</span><span style="width:51.34px">Seru</span><span style="width:45px">Seru</span></div><div style="height:7px;background:#3a4a38"></div><div style="height:11px;background:#b8f8a0"></div></div><div class="c" style="left:618px;width:205px;background:#222"><div class="h" style="background:#9a9c9e"><span style="width:51.34px">Seru</span><span style="width:51.34px">Seru</span><span style="width:51.34px">Seru</span><span style="width:46px">Seru</span></div><div style="height:18px;background:#7c887c"></div></div><div class="c" style="left:823px;width:1438px;background:#222"><div class="h" style="background:#6a9a60"><span style="width:51.34px">Seru</span><span style="width:51.34px">Seru</span><span style="width:51.34px">Seru</span><span style="width:51.34px">Seru</span><span style="width:51.34px">Seru</span><span style="width:51.34px">Seru</span><span style="width:51.34px">Seru</span><span style="width:51.34px">Seru</span><span style="width:51.34px">Seru</span><span style="width:51.34px">Seru</span><span style="width:51.34px">Seru</span><span style="width:51.34px">Seru</span><span style="width:51.34px">Seru</span><span style="width:51.34px">Seru</span><span style="width:51.34px">Seru</span><span style="width:51.34px">Seru</span><span style="width:51.34px">Seru</span><span style="width:51.34px">Seru</span><span style="width:51.34px">Seru</span><span style="width:51.34px">Seru</span><span style="width:51.34px">Seru</span><span style="width:51.34px">Seru</span><span style="width:51.34px">Seru</span><span style="width:51.34px">Seru</span><span style="width:51.34px">Seru</span><span style="width:51.34px">Seru</span><span style="width:51.34px">Seru</span><span style="width:40px">Seru</span></div><div style="height:7px;background:#3a4a38"></div><div style="height:11px;background:#b8f8a0"></div></div></div>
<!-- 19 -->
<div class="row"><div class="c" style="left:412px;width:1849px;background:#a8f048"><div class="h" style="background:#6a9a30"><span style="width:102.68px">XOU_130</span><span style="width:102.68px">XOU_130</span><span style="width:102.68px">XOU_130</span><span style="width:102.68px">XOU_130</span><span style="width:102.68px">XOU_130</span><span style="width:102.68px">XOU_130</span><span style="width:102.68px">XOU_130</span><span style="width:102.68px">XOU_130</span><span style="width:102.68px">XOU_130</span><span style="width:102.68px">XOU_130</span><span style="width:102.68px">XOU_130</span><span style="width:102.68px">XOU_130</span><span style="width:102.68px">XOU_130</span><span style="width:102.68px">XOU_130</span><span style="width:102.68px">XOU_130</span><span style="width:102.68px">XOU_130</span><span style="width:102.68px">XOU_130</span><span style="width:90px">XOU_130</span></div><div style="height:8px;background:#4a6a22"></div></div></div>
<!-- 20 -->
<div class="row"><div class="c" style="left:203px;width:4px;background:#a8f048"></div><div class="c" style="left:614px;width:4px;background:#a8f048"></div><div class="c" style="left:819px;width:4px;background:#a8f048"></div><div class="c" style="left:1024px;width:4px;background:#a8f048"></div><div class="c" style="left:1127px;width:4px;background:#a8f048"></div><div class="c" style="left:1230px;width:4px;background:#a8f048"></div></div>
<!-- 21 -->
<div class="row"><div class="c" style="left:412px;width:26px;background:#90f8b0"><div class="h" style="background:#5a9a78">N</div></div><div class="c" style="left:618px;width:26px;background:#90f8b0"><div class="h" style="background:#5a9a78">N</div></div><div class="c" style="left:1131px;width:26px;background:#90f8b0"><div class="h" style="background:#5a9a78">N</div></div></div>
<!-- 22 -->
<div class="row"><div class="c" style="left:823px;width:51px;background:#b8f8a0"><div class="h" style="background:#6a9a68">NOIZ</div></div><div class="c" style="left:1644px;width:51px;background:#b8f8a0"><div class="h" style="background:#6a9a68">NOIZ</div></div><div class="c" style="left:1849px;width:51px;background:#b8f8a0"><div class="h" style="background:#6a9a68">NOIZ</div></div><div class="c" style="left:2053px;width:51px;background:#b8f8a0"><div class="h" style="background:#6a9a68">NOIZ</div></div></div>
<!-- 23 -->
<div class="row y"><div class="c" style="left:207px;width:103px;background:#a8f048"><div class="h" style="background:#6a9a30">NOIZU_1</div></div><div class="c" style="left:823px;width:103px;background:#a8f048"><div class="h" style="background:#6a9a30">NOIZU_1</div></div><div class="c" style="left:1438px;width:103px;background:#a8f048"><div class="h" style="background:#6a9a30">NOIZU_1</div></div></div>
<!-- 24 -->
<div class="row p"><div class="c" style="left:1028px;width:15px;background:#f06090"></div><div class="c" style="left:1234px;width:13px;background:#f06090"></div></div>
<!-- 25 -->
<div class="row y"><div class="c" style="left:105px;width:103px;background:#e2f850"><div class="h" style="background:#8a9a30">NOIZU_1</div></div><div class="c" style="left:310px;width:103px;background:#e2f850"><div class="h" style="background:#8a9a30">NOIZU_1</div></div><div class="c" style="left:515px;width:103px;background:#e2f850"><div class="h" style="background:#8a9a30">NOIZU_1</div></div><div class="c" style="left:721px;width:103px;background:#e2f850"><div class="h" style="background:#8a9a30">NOIZU_1</div></div><div class="c" style="left:926px;width:90px;background:#e2f850"><div class="h" style="background:#8a9a30">NOIZU_1</div></div><div class="c" style="left:1131px;width:103px;background:#e2f850"><div class="h" style="background:#8a9a30">NOIZU_1</div></div><div class="c" style="left:1337px;width:103px;background:#e2f850"><div class="h" style="background:#8a9a30">NOIZU_1</div></div><div class="c" style="left:1541px;width:103px;background:#e2f850"><div class="h" style="background:#8a9a30">NOIZU_1</div></div></div>
<!-- 26 -->
<div class="row p"><div class="c" style="left:407px;width:54px;background:#ea3464"><div class="h" style="background:#921a3c">KSH</div></div><div class="c" style="left:613px;width:54px;background:#ea3464"><div class="h" style="background:#921a3c">KSH</div></div><div class="c" style="left:823px;width:52px;background:#ea3464"><div class="h" style="background:#921a3c">KSH</div></div><div class="c" style="left:1028px;width:53px;background:#ea3464"><div class="h" style="background:#921a3c">KSH</div></div></div>
<!-- 27 -->
<div class="row"><div class="c" style="left:823px;width:30px;background:#50b8f8"><div class="h" style="background:#3478a0">KS</div></div></div>
<!-- 28 -->
<div class="row p"><div class="c" style="left:939px;width:77px;background:#ea3464"><div class="h" style="background:#921a3c">UP17 -</div></div></div>
<!-- 29 -->
<div class="row"><div class="c" style="left:939px;width:77px;background:#50b8f8"><div class="h" style="background:#3478a0">UP07 -</div></div></div>
<div style="position:absolute;left:2262px;top:0;width:37px;height:1288px;background:rgba(0,0,0,.12);z-index:4"></div>
</div>

<!-- right scrollbar -->
<div style="position:absolute;left:2828px;top:81px;width:36px;height:1288px;background:#27292b"></div>
<svg style="position:absolute;left:2837px;top:88px" width="20" height="14"><path d="M2 12 L10 2 L18 12 Z" fill="#8a8a8a"/></svg>
<div style="position:absolute;left:2842px;top:118px;width:10px;height:1220px;border-radius:5px;background:#7c7c7c"></div>
<svg style="position:absolute;left:2837px;top:1343px" width="20" height="14"><path d="M2 2 L18 2 L10 12 Z" fill="#8a8a8a"/></svg>

<!-- bottom bars -->
<div class="bot" style="left:18px;width:509px">
<span style="position:absolute;left:37px;top:5px;font-size:21px;color:#ddd">M</span>
<span style="position:absolute;left:137px;top:5px;font-size:21px;color:#ddd">S</span>
<svg style="position:absolute;left:232px;top:6px" width="22" height="24"><path d="M5 7 A8 8 0 1 0 17 7" fill="none" stroke="#3a8ae6" stroke-width="3"/><line x1="11" y1="2" x2="11" y2="12" stroke="#3a8ae6" stroke-width="3"/></svg>
<span style="position:absolute;left:345px;top:5px;font-size:21px;color:#ccc">Tiny</span>
<svg style="position:absolute;left:437px;top:12px" width="16" height="12"><path d="M1 1 L15 1 L8 11 Z" fill="#8a8a8a"/></svg>
<svg style="position:absolute;left:480px;top:6px" width="16" height="22"><rect x="0" y="1" width="15" height="4" fill="#8a8a8a"/><rect x="0" y="8" width="15" height="4" fill="#8a8a8a"/><rect x="0" y="15" width="15" height="4" fill="#8a8a8a"/></svg>
</div>
<div class="bot" style="left:529px;width:2335px">
<svg style="position:absolute;left:12px;top:8px" width="14" height="20"><path d="M12 1 L12 19 L2 10 Z" fill="#8a8a8a"/></svg>
<div style="position:absolute;left:50px;top:11px;width:1822px;height:12px;border-radius:6px;background:#8a8a8a"></div>
<svg style="position:absolute;left:2055px;top:8px" width="14" height="20"><path d="M2 1 L2 19 L12 10 Z" fill="#8a8a8a"/></svg>
<svg style="position:absolute;left:2096px;top:3px" width="190" height="28"><circle cx="6" cy="14" r="4" fill="#8a8a8a"/><rect x="6" y="12" width="170" height="4" fill="#8a8a8a"/><rect x="20" y="3" width="8" height="22" rx="3" fill="#8a8a8a"/><circle cx="176" cy="14" r="8" fill="#8a8a8a"/></svg>
<svg style="position:absolute;left:2300px;top:0" width="30" height="34"><rect x="12" y="2" width="14" height="6" fill="#8a8a8a"/><rect x="12" y="11" width="14" height="6" fill="#8a8a8a"/><rect x="0" y="20" width="9" height="4" fill="#8a8a8a"/><rect x="0" y="27" width="9" height="4" fill="#8a8a8a"/></svg>
</div>
</body></html>
